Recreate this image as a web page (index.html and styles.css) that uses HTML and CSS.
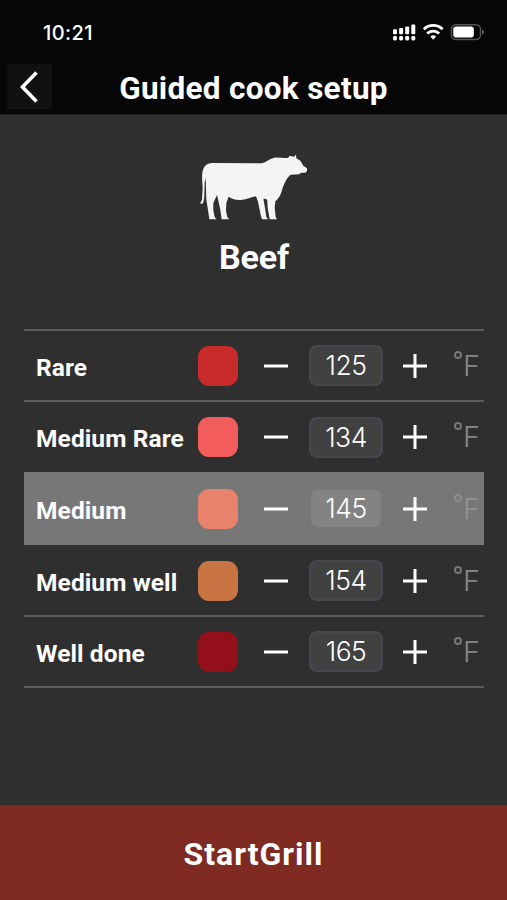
FILE: index.html
```html
<!DOCTYPE html>
<html lang="en">
<head>
<meta charset="utf-8">
<title>Guided cook setup</title>
<link rel="stylesheet" href="styles.css">
</head>
<body>
<svg class="defs" width="0" height="0" aria-hidden="true">
  <symbol id="minus" viewBox="0 0 24 24"><path d="M0 12H24" stroke="#fff" stroke-width="3"/></symbol>
  <symbol id="plus" viewBox="0 0 24 24"><path d="M0 12H24M12 0V24" stroke="#fff" stroke-width="3"/></symbol>
</svg>
<header class="top">
  <div class="status">
    <span class="time">10:21</span>
    <svg class="indicators" viewBox="0 0 92 18" width="92" height="18">
      <g fill="#fff">
        <rect x="1" y="6.3" width="4" height="5" rx="1"/><rect x="7.1" y="5" width="4" height="6.3" rx="1"/><rect x="13.2" y="3.5" width="4" height="7.8" rx="1"/><rect x="19.3" y="1.5" width="4" height="9.8" rx="1"/>
        <rect x="1" y="13" width="4" height="4.5" rx="1.4"/><rect x="7.1" y="13" width="4" height="4.5" rx="1.4"/><rect x="13.2" y="13" width="4" height="4.5" rx="1.4"/><rect x="19.3" y="13" width="4" height="4.5" rx="1.4"/>
        <path d="M38.400 13.500a4.200 4.200 0 0 1 5.600 0l-2.800 3.300z"/>
      </g>
      <g fill="none" stroke="#fff" stroke-width="2.800">
        <path d="M31.800 6.200a13.600 13.600 0 0 1 18.800 0"/><path d="M35.200 10.500a8.700 8.700 0 0 1 12 0"/>
      </g>
      <rect x="59.500" y="1.800" width="29" height="14.700" rx="4.500" fill="none" stroke="#555" stroke-width="1.500"/>
      <rect x="61.300" y="3.600" width="20.500" height="11" rx="2.800" fill="#fff"/>
      <path d="M90 6.800q2 .6 2 2.300t-2 2.300z" fill="#666"/>
    </svg>
  </div>
  <div class="nav">
    <button class="back" aria-label="Back"><svg viewBox="0 0 20 32" width="20" height="32"><path d="M16.500 1.500L2.500 16L16.500 30.500" fill="none" stroke="#fff" stroke-width="3.600"/></svg></button>
    <h1 class="title">Guided cook setup</h1>
  </div>
</header>
<main class="content">
  <svg class="cow" viewBox="60 43 324 198" width="108" height="66">
    <path fill="#f4f4f4" d="M96 70L246 71C258 68 266 59 280 55C296 51 310 58 325 54L328 49L338 50L340 53L348 45L349 56L361 63L370 78L381 86V94L376 99L364 99L357 104L332 105C322 112 312 131 306 151C303 162 299 174 286 185L284 205L287 232L291 239H269L263 205L262 183L259 178L250 177L255 205L259 232L264 239H246L242 225L234 186L228 170C209 174 196 182 178 181C163 180 154 176 146 171L139 190L138 213L142 233L148 239H125L121 211L114 179L111 166L100 190L100 212L104 232L109 239H88L84 211L79 180L77 115L74 128L73 170L70 189L63 194L61 190L66 180L68 147C67 121 64 104 70 87C75 76 83 71 96 70Z"/>
  </svg>
  <h2 class="meat">Beef</h2>
  <ul class="levels">
    <li class="level"><span class="name">Rare</span><i class="swatch rare"></i><svg class="step"><use href="#minus"/></svg><span class="temp">125</span><svg class="step"><use href="#plus"/></svg><span class="unit"><i class="ring"></i>F</span></li>
    <li class="level"><span class="name">Medium Rare</span><i class="swatch medium-rare"></i><svg class="step"><use href="#minus"/></svg><span class="temp">134</span><svg class="step"><use href="#plus"/></svg><span class="unit"><i class="ring"></i>F</span></li>
    <li class="level selected"><span class="name">Medium</span><i class="swatch medium"></i><svg class="step"><use href="#minus"/></svg><span class="temp">145</span><svg class="step"><use href="#plus"/></svg><span class="unit"><i class="ring"></i>F</span></li>
    <li class="level"><span class="name">Medium well</span><i class="swatch medium-well"></i><svg class="step"><use href="#minus"/></svg><span class="temp">154</span><svg class="step"><use href="#plus"/></svg><span class="unit"><i class="ring"></i>F</span></li>
    <li class="level"><span class="name">Well done</span><i class="swatch well-done"></i><svg class="step"><use href="#minus"/></svg><span class="temp">165</span><svg class="step"><use href="#plus"/></svg><span class="unit"><i class="ring"></i>F</span></li>
  </ul>
</main>
<button class="start">StartGrill</button>
</body>
</html>
```
FILE: styles.css
```css
* { box-sizing: border-box; }
body {
  margin: 0;
  height: 900px;
  overflow: hidden;
  display: flex;
  flex-direction: column;
  background: #2f2f2f;
  color: #fff;
  font-family: Roboto, "Liberation Sans", sans-serif;
}
button { border: 0; padding: 0; color: inherit; font: inherit; }
.defs { position: absolute; }
.top { height: 115px; background: #060606; border-bottom: 1px solid #222; }
.status {
  height: 64px;
  padding: 23px 23px 0 43px;
  display: flex;
  justify-content: space-between;
}
.time { font: 500 20px/20px Inter, sans-serif; letter-spacing: 0.4px; }
.nav {
  display: grid;
  grid-template-columns: 45px 1fr 45px;
  padding: 0 7px;
}
.back {
  height: 45px;
  background: #111;
  display: flex;
  align-items: center;
  justify-content: center;
}
.title {
  margin: 0;
  padding-top: 2px;
  text-align: center;
  font-size: 31.500px;
  line-height: 45px;
  font-weight: 700;
  letter-spacing: 0.300px;
  white-space: nowrap;
}
.content {
  flex: 1;
  display: flex;
  flex-direction: column;
  align-items: center;
  padding: 39px 23px 0 24px;
}
.cow { display: block; }
.meat {
  margin: 17px 0 0;
  font-size: 34px;
  line-height: 40px;
  font-weight: 700;
  letter-spacing: -0.1px;
}
.levels {
  list-style: none;
  width: 100%;
  margin: 51.500px 0 0;
  padding: 0;
}
.level {
  height: 71.600px;
  display: grid;
  grid-template-columns: 162px 66px 45px 94px 51px 1fr;
  align-items: center;
  padding: 1px 0 0 12px;
  border-top: 2px solid #5c5c5c;
}
.level:last-child { height: 73px; border-bottom: 2px solid #5c5c5c; }
.selected { background: #777; border-color: #777; }
.selected + .level { border-color: #777; }
.name {
  padding-top: 4px;
  font-size: 24.500px;
  line-height: 28px;
  font-weight: 700;
  letter-spacing: 0.1px;
  white-space: nowrap;
}
.swatch { width: 40px; height: 40px; border-radius: 11px; }
.rare { background: #c92a2a; }
.medium-rare { background: #f25c5c; }
.medium { background: #e9826a; }
.medium-well { background: #c87543; }
.well-done { background: #930f19; }
.step { width: 24px; height: 24px; display: block; }
.temp {
  width: 74px;
  height: 41px;
  border: 2px solid #48474f;
  border-radius: 8px;
  background: #414142;
  text-align: center;
  font: 300 26.500px/37px Inter, sans-serif;
  letter-spacing: -0.5px;
}
.selected .temp { background: #838383; border-color: #777; }
.unit {
  display: flex;
  gap: 1px;
  color: #888;
  font: 300 29px/30px Inter, sans-serif;
}
.ring { width: 8px; height: 8px; border: 2px solid #777; border-radius: 50%; }
.selected .unit { color: #929292; }
.selected .ring { border-color: #8e8e8e; }
.start {
  height: 95px;
  background: #7f2b22;
  font-size: 32px;
  font-weight: 700;
  letter-spacing: 1px;
  padding-top: 2px;
}
```
